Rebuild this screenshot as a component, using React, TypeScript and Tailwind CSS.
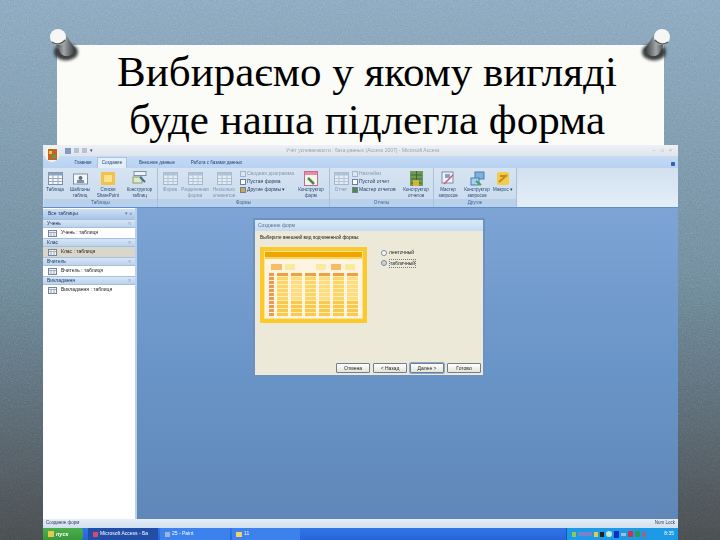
import React from "react";

const ff = { fontFamily: '"Liberation Sans", sans-serif' };

function Pin({ flip = false }: { flip?: boolean }) {
  return (
    <svg width="34" height="36" viewBox="0 0 34 36" style={flip ? { transform: "scaleX(-1)" } : undefined}>
      <defs>
        <linearGradient id="pinBody" x1="0" x2="1" y1="0" y2="0">
          <stop offset="0" stopColor="#2f3135" />
          <stop offset="0.45" stopColor="#a4a7a8" />
          <stop offset="1" stopColor="#2b2e32" />
        </linearGradient>
        <filter id="pinBlur"><feGaussianBlur stdDeviation="1.800" /></filter>
        <filter id="pinSoft"><feGaussianBlur stdDeviation="0.6" /></filter>
      </defs>
      <ellipse cx="18" cy="25" rx="12" ry="8.500" fill="#26292d" opacity="0.9" filter="url(#pinBlur)" />
      <g filter="url(#pinSoft)">
        <path d="M6 13 L18 8 L28 23 Q21 33 13 27 Z" fill="url(#pinBody)" />
        <ellipse cx="10" cy="10" rx="8" ry="8" fill="#f6f6f4" />
        <path d="M4 15 Q11 20 17 13" stroke="#55585c" strokeWidth="1.500" fill="none" />
      </g>
    </svg>
  );
}

function Tool({ label, children, w, dim = false }: { label: string; children: React.ReactNode; w: string; dim?: boolean }) {
  return (
    <div className={`${w} flex flex-col items-center shrink-0 pt-[3px] ${dim ? "opacity-50" : ""}`}>
      <div className="h-[14px] flex items-center justify-center">{children}</div>
      <div className="text-[4.5px] leading-[5.5px] text-center text-[#24466f] mt-[2px]">{label}</div>
    </div>
  );
}

function Grid() {
  return (
    <svg width="15" height="13" viewBox="0 0 15 13">
      <rect x="0.5" y="0.5" width="14" height="12" fill="#f4f7fb" stroke="#7f8fa6" />
      <rect x="0.5" y="0.5" width="14" height="3" fill="#8ca3bf" />
      <path d="M5 3v9M10 3v9M1 6.500h13M1 9.500h13" stroke="#9aa9bc" />
    </svg>
  );
}

function SmallRow({ label, color, dim = false }: { label: string; color: string; dim?: boolean }) {
  return (
    <div className={`flex items-center gap-[1px] h-[8px] ${dim ? "opacity-45" : ""}`}>
      <span className="w-[6px] h-[6px] border border-[#6f7f96]" style={{ background: color }} />
      <span className="text-[5px] text-[#1e3a5f] whitespace-nowrap">{label}</span>
    </div>
  );
}

function Group({ label, w, children }: { label: string; w: string; children: React.ReactNode }) {
  return (
    <div className={`${w} shrink-0 flex flex-col border-r border-[#a9c0da]`}>
      <div className="h-[31px] flex">{children}</div>
      <div className="h-[8px] bg-[#b9d0ea] text-[4.5px] leading-[8px] text-center text-[#3f6390]">{label}</div>
    </div>
  );
}

function NavSection({ title, item, selected = false }: { title: string; item: string; selected?: boolean }) {
  return (
    <div>
      <div className="h-[9px] flex items-center justify-between pl-[4px] pr-[2px] bg-gradient-to-b from-[#d8e6f6] to-[#bcd2ec] border-y border-[#a6bfdd]">
        <span className="text-[5px] text-[#15325a]">{title}</span>
        <span className="text-[5px] text-[#6e86a8] pr-[2px]">≈</span>
      </div>
      <div className={`h-[10px] flex items-center gap-[4px] pl-[5px] ${selected ? "bg-[#d9d6cc]" : "bg-white"}`}>
        <svg width="9" height="7" viewBox="0 0 9 7">
          <rect x="0.5" y="0.5" width="8" height="6" fill="#eef1f5" stroke="#77839a" />
          <path d="M1 2.500h7M3 2.500v4M6 2.500v4" stroke="#8a96aa" strokeWidth="0.7" />
        </svg>
        <span className="text-[5px] text-[#222]">{item}</span>
      </div>
    </div>
  );
}

function WizBtn({ label, active = false }: { label: string; active?: boolean }) {
  return (
    <div className={`w-[34px] h-[10px] rounded-[1px] bg-gradient-to-b from-white to-[#e6e4d8] border border-[#6d7f93] text-[5px] leading-[8px] text-center text-[#222] ${active ? "outline outline-[#8fa8d0]" : ""}`}>
      {label}
    </div>
  );
}

function Preview() {
  const cols = [0, 1, 2, 3, 4, 5];
  const rows = Array.from({ length: 11 }, (_, i) => i);
  return (
    <div className="w-[107px] h-[76px] p-[4px] bg-[#fbc92a] shrink-0">
      <div className="h-full bg-[#fdf4e2] border border-[#f9e29a]">
        <div className="h-[5px] bg-[#f0a500]" />
        <div className="h-[2px] bg-[#fad35a]" />
        <div className="flex h-[6px] mt-[5px] pl-[6px]">
          <div className="w-[11px] h-[6px] bg-[#f6bc66]" />
          <div className="w-[10px] h-[6px] ml-[3px] bg-[#fbe9a0]" />
          <div className="w-[10px] h-[6px] ml-[21px] bg-[#fbe9a0]" />
          <div className="w-[10px] h-[6px] ml-[5px] bg-[#f6bc66]" />
          <div className="w-[10px] h-[6px] ml-[4px] bg-[#fbe9a0]" />
        </div>
        <div className="flex gap-[3px] pl-[4px] mt-[3px]">
          <div className="w-[5px] flex flex-col gap-[1px]">
            {rows.map((r) => (
              <div key={r} className="h-[3px] bg-[#f09a50]" />
            ))}
          </div>
          {cols.map((c) => (
            <div key={c} className="w-[11px] flex flex-col gap-[1px] bg-[#ffeeb0]">
              <div className="h-[3px] bg-[#f0a040]" />
              {rows.slice(1).map((r) => (
                <div key={r} className={`h-[3px] ${r > 6 ? "bg-[#fbc84e]" : c % 2 === 0 ? "bg-[#fbd46a]" : "bg-[#fddc84]"}`} />
              ))}
            </div>
          ))}
        </div>
      </div>
    </div>
  );
}

export default function App() {
  return (
    <div className="relative w-[720px] h-[540px] overflow-hidden flex flex-col pt-[45px] bg-gradient-to-b from-[#86a5bd] via-[#6c8799] to-[#464a4c]" style={ff}>
      <svg className="absolute inset-0 opacity-40 mix-blend-overlay" width="720" height="540">
        <filter id="noise">
          <feTurbulence type="fractalNoise" baseFrequency="0.75" numOctaves="2" seed="4" />
          <feColorMatrix type="saturate" values="0" />
        </filter>
        <rect width="720" height="540" filter="url(#noise)" />
      </svg>

      <div className="relative ml-[57px] w-[607px] h-[100px] shrink-0 bg-[#fbfbf7] text-center text-black text-[43px] leading-[48px] pl-[13px] pt-[3px] whitespace-nowrap" style={{ fontFamily: '"Liberation Serif", serif' }}>
        <div>Вибираємо у якому вигляді</div>
        <div>буде наша підлегла форма</div>
      </div>
      <div className="absolute left-[48px] top-[27px]"><Pin /></div>
      <div className="absolute left-[638px] top-[27px]"><Pin flip /></div>

      <div className="relative ml-[43px] w-[635px] flex-1 flex flex-col min-h-0 blur-[0.4px] bg-[#dfe9f5]">
        {/* title bar */}
        <div className="h-[11px] shrink-0 flex items-center bg-gradient-to-b from-[#eef1f5] to-[#dfe5ec] pl-[22px] pr-[4px]">
          <div className="flex items-center gap-[3px] w-[60px]">
            <span className="w-[6px] h-[6px] bg-[#7f9cc0]" />
            <span className="w-[5px] h-[5px] bg-[#b7c2d0]" />
            <span className="w-[5px] h-[5px] bg-[#b7c2d0]" />
            <span className="text-[5px] text-[#34465e]">▾</span>
          </div>
          <div className="flex-1 text-center text-[5px] text-[#9aa3ae] whitespace-nowrap pr-[52px]">Учёт успеваемости : база данных (Access 2007) - Microsoft Access</div>
          <div className="text-[5px] text-[#a8b0ba] tracking-[2px]">– □ ×</div>
        </div>
        {/* tabs */}
        <div className="h-[12px] shrink-0 flex items-end bg-gradient-to-b from-[#c5daf5] to-[#b8d2f2] pl-[26px] pr-[3px] relative">
          <span className="text-[4.5px] leading-[10px] w-[28px] text-center text-[#24466f]">Главная</span>
          <span className="text-[4.5px] leading-[10px] w-[30px] text-center bg-[#e4eef9] border-x border-t border-[#a9c4e2] rounded-t-[1px] text-[#24466f]">Создание</span>
          <span className="text-[4.5px] leading-[10px] ml-[10px] w-[40px] text-center text-[#24466f] whitespace-nowrap">Внешние данные</span>
          <span className="text-[4.5px] leading-[10px] ml-[11px] w-[57px] text-center text-[#24466f] whitespace-nowrap">Работа с базами данных</span>
          <span className="ml-auto mb-[2px] w-[4px] h-[4px] rounded-[1px] bg-[#2f62b0]" />
        </div>
        {/* ribbon */}
        <div className="h-[40px] shrink-0 flex bg-gradient-to-b from-[#d6e3f1] to-[#c9dbee] border-b border-[#5f8fc8] pl-[1px]">
          <Group label="Таблицы" w="w-[114px]">
            <Tool label="Таблица" w="w-[22px]"><Grid /></Tool>
            <Tool label="Шаблоны таблиц" w="w-[28px]"><svg width="15" height="13" viewBox="0 0 15 13"><rect x="0.5" y="2" width="14" height="10" fill="#f4f7fb" stroke="#7f8fa6" /><circle cx="7.500" cy="6" r="2" fill="#5d6f8a" /><rect x="4" y="8" width="7" height="3" fill="#7e90ab" /></svg></Tool>
            <Tool label="Списки SharePoint" w="w-[28px]"><svg width="14" height="13" viewBox="0 0 14 13"><rect width="14" height="13" fill="#f4c24a" /><rect x="3" y="3" width="8" height="7" fill="#fde28c" /></svg></Tool>
            <Tool label="Конструктор таблиц" w="w-[35px]"><svg width="15" height="14" viewBox="0 0 15 14"><rect x="2" y="0.5" width="12" height="4" fill="#eef2f7" stroke="#7f8fa6" /><rect x="1" y="6" width="9" height="6" fill="#dfe8c0" stroke="#8aa06e" /><path d="M8 6l5 5" stroke="#3b6ea8" strokeWidth="2" /></svg></Tool>
          </Group>
          <Group label="Формы" w="w-[172px]">
            <Tool label="Форма" w="w-[24px]" dim><Grid /></Tool>
            <Tool label="Разделенная форма" w="w-[26px]" dim><Grid /></Tool>
            <Tool label="Несколько элементов" w="w-[32px]" dim><Grid /></Tool>
            <div className="w-[58px] flex flex-col pt-[2px] shrink-0">
              <SmallRow label="Сводная диаграмма" color="#e9edf2" dim />
              <SmallRow label="Пустая форма" color="#ffffff" />
              <SmallRow label="Другие формы ▾" color="#c9a64f" />
            </div>
            <Tool label="Конструктор форм" w="w-[26px]"><svg width="14" height="15" viewBox="0 0 14 15"><rect x="0.5" y="0.5" width="13" height="14" fill="#f5f7ef" stroke="#c46a8d" /><rect x="1" y="1" width="12" height="3" fill="#e78ba8" /><path d="M4 7l6 6" stroke="#4d8a4a" strokeWidth="2.500" /></svg></Tool>
          </Group>
          <Group label="Отчеты" w="w-[104px]">
            <Tool label="Отчет" w="w-[22px]" dim><Grid /></Tool>
            <div className="w-[47px] flex flex-col pt-[2px] shrink-0">
              <SmallRow label="Наклейки" color="#e9edf2" dim />
              <SmallRow label="Пустой отчет" color="#ffffff" />
              <SmallRow label="Мастер отчетов" color="#4f8a4a" />
            </div>
            <Tool label="Конструктор отчетов" w="w-[34px]"><svg width="13" height="15" viewBox="0 0 13 15"><rect width="13" height="15" fill="#6f9a58" /><path d="M1 4h11M1 8h11M1 12h11M6.500 0v15" stroke="#3f6a3a" /><rect x="3" y="9" width="6" height="6" fill="#d8b13a" /></svg></Tool>
          </Group>
          <Group label="Другие" w="w-[83px]">
            <Tool label="Мастер запросов" w="w-[28px]"><svg width="15" height="15" viewBox="0 0 15 15"><rect x="1" y="1" width="11" height="11" fill="#eef2f7" stroke="#7e8ca0" /><path d="M3 13l9-9" stroke="#c85b7d" strokeWidth="1.500" /><path d="M4 3h5v4H4z" fill="#8ca4c4" /></svg></Tool>
            <Tool label="Конструктор запросов" w="w-[30px]"><svg width="15" height="15" viewBox="0 0 15 15"><rect x="5" y="1" width="9" height="7" fill="#7fb0dc" stroke="#4a7cb0" /><rect x="1" y="7" width="8" height="7" fill="#a8d0ee" stroke="#4a7cb0" /><path d="M6 10l5 4" stroke="#4d9a5a" strokeWidth="2" /></svg></Tool>
            <Tool label="Макрос ▾" w="w-[22px]"><svg width="14" height="15" viewBox="0 0 14 15"><rect x="1" y="1" width="12" height="13" rx="2" fill="#f3cb46" /><path d="M3 11l8-7M4 5h5" stroke="#c48a1c" strokeWidth="2" /></svg></Tool>
          </Group>
          <div className="flex-1 bg-gradient-to-b from-[#d2e0ef] to-[#e4eef8]" />
        </div>
        {/* body */}
        <div className="flex-1 min-h-0 flex">
          <div className="w-[94px] shrink-0 flex flex-col bg-white border-r-2 border-[#b9d0ea] pt-[1px]">
            <div className="h-[10px] shrink-0 flex items-center justify-between pl-[5px] pr-[3px] bg-gradient-to-b from-[#cfe0f4] to-[#a8c6e8]">
              <span className="text-[5px] text-[#15325a]">Все таблицы</span>
              <span className="text-[5px] text-[#587aa6]">▾ «</span>
            </div>
            <NavSection title="Учень" item="Учень : таблиця" />
            <NavSection title="Клас" item="Клас : таблиця" selected />
            <NavSection title="Вчитель" item="Вчитель : таблиця" />
            <NavSection title="Викладання" item="Викладання : таблиця" />
          </div>
          <div className="flex-1 flex flex-col bg-gradient-to-b from-[#7da4d4] via-[#6a95c8] to-[#5f88b8] pt-[10px] pl-[116px]">
            {/* dialog */}
            <div className="w-[232px] h-[159px] shrink-0 flex flex-col bg-[#ece9d8] border-2 border-[#6d92c2]">
              <div className="h-[11px] shrink-0 flex items-center pl-[3px] bg-gradient-to-b from-[#dcebf9] to-[#c4daf2] text-[5px] text-[#5d7290]">Создание форм</div>
              <div className="flex-1 flex flex-col pl-[5px] pr-[2px] pt-[3px]">
                <div className="text-[4.7px] leading-[7px] text-[#111]">Выберите внешний вид подчиненной формы:</div>
                <div className="flex mt-[6px]">
                  <Preview />
                  <div className="ml-[14px] pt-[2px] flex flex-col gap-[2px]">
                    <div className="flex items-center gap-[2px]"><span className="w-[6px] h-[6px] rounded-full bg-white border border-[#7a8a9c]" /><span className="text-[5px] text-[#222]">ленточный</span></div>
                    <div className="flex items-center gap-[2px]"><span className="w-[6px] h-[6px] rounded-full bg-[#d0d4d0] border border-[#7a8a9c]" /><span className="text-[5px] text-[#222] border border-dotted border-[#777]">табличный</span></div>
                  </div>
                </div>
                <div className="mt-auto mb-[2px] flex justify-end gap-[3px]">
                  <WizBtn label="Отмена" />
                  <WizBtn label="< Назад" />
                  <WizBtn label="Далее >" active />
                  <WizBtn label="Готово" />
                </div>
              </div>
            </div>
          </div>
        </div>
        {/* status */}
        <div className="h-[9px] shrink-0 flex items-center justify-between px-[3px] bg-gradient-to-b from-[#e6eef8] to-[#d2dfee] text-[4.500px] text-[#2c3f5a]">
          <span>Создание форм</span>
          <span>Num Lock</span>
        </div>
        {/* taskbar */}
        <div className="h-[12px] shrink-0 flex items-center bg-gradient-to-b from-[#2f76e8] to-[#2a63d8]">
          <div className="w-[40px] h-full flex items-center pl-[5px] gap-[2px] bg-gradient-to-b from-[#4cae4c] to-[#379a3c] rounded-r-[3px] text-[5.500px] italic font-bold text-white">
            <span className="w-[6px] h-[6px] bg-[#e8c84a]" />пуск
          </div>
          <div className="ml-[5px] w-[70px] h-full flex items-center gap-[2px] pl-[5px] bg-[#234ea8] text-[5px] text-white whitespace-nowrap overflow-hidden">
            <span className="w-[5px] h-[5px] shrink-0 bg-[#d84a6a]" />Microsoft Access - Ба
          </div>
          <div className="ml-[2px] w-[70px] h-full flex items-center gap-[2px] pl-[5px] bg-[#3c81ec] text-[5px] text-white">
            <span className="w-[5px] h-[5px] bg-[#9fb4d8]" />25 - Paint
          </div>
          <div className="ml-[2px] w-[68px] h-full flex items-center gap-[2px] pl-[4px] bg-[#3c81ec] text-[5px] text-white">
            <span className="w-[6px] h-[5px] bg-[#f1d26a]" />11
          </div>
          <div className="ml-auto w-[112px] h-full flex items-center gap-[2px] pl-[5px] bg-[#1d9ae6] border-l border-[#0f5cb0]">
            <span className="w-[4px] h-[5px] bg-[#8fc75a]" />
            <span className="w-[14px] h-[4px] bg-[#7b83c8]" />
            <span className="w-[4px] h-[5px] bg-[#e8c84a]" />
            <span className="w-[4px] h-[5px] bg-[#222]" />
            <span className="w-[6px] h-[6px] rounded-full bg-[#c8e8d0]" />
            <span className="w-[5px] h-[7px] bg-[#1030c0]" />
            <span className="w-[5px] h-[3px] bg-[#9fc0d8]" />
            <span className="w-[5px] h-[6px] bg-[#d03050]" />
            <span className="w-[5px] h-[6px] bg-[#2a9a5a]" />
            <span className="w-[4px] h-[5px] bg-[#a06090]" />
            <span className="ml-auto pr-[4px] text-[5px] text-white">8:35</span>
          </div>
        </div>
        {/* office button */}
        <div className="absolute left-[2px] top-[1px] w-[14px] h-[16px] rounded-full bg-[#f2f4ea] flex items-center justify-center">
          <svg width="9" height="11" viewBox="0 0 9 11">
            <rect width="9" height="11" fill="#c2642a" />
            <rect x="1" y="2" width="3" height="3" fill="#f0c040" />
            <rect x="4" y="6" width="4" height="3" fill="#5aa040" />
          </svg>
        </div>
      </div>
    </div>
  );
}
